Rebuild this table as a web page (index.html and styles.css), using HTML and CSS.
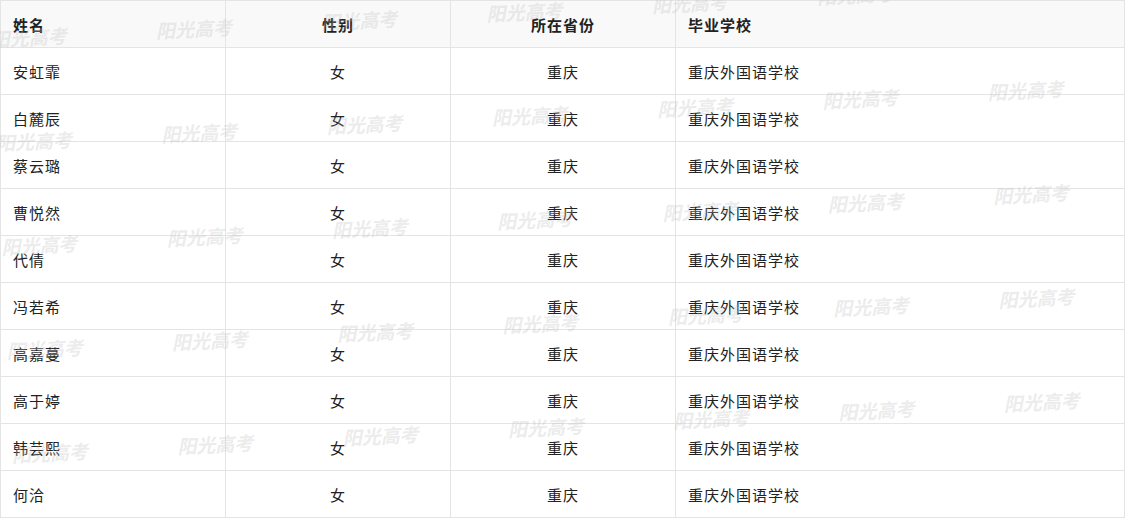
FILE: index.html
```html
<!DOCTYPE html>
<html lang="zh-CN">
<head>
<meta charset="utf-8">
<title>录取名单</title>
<link rel="stylesheet" href="styles.css">
</head>
<body>
<div class="sheet">
  <div class="table" role="table">
    <div class="row head" role="row">
      <div class="cell left">姓名</div>
      <div class="cell center">性别</div>
      <div class="cell center">所在省份</div>
      <div class="cell left">毕业学校</div>
    </div>
    <div class="row" role="row"><div class="cell left">安虹霏</div><div class="cell center">女</div><div class="cell center">重庆</div><div class="cell left">重庆外国语学校</div></div>
    <div class="row" role="row"><div class="cell left">白麓辰</div><div class="cell center">女</div><div class="cell center">重庆</div><div class="cell left">重庆外国语学校</div></div>
    <div class="row" role="row"><div class="cell left">蔡云璐</div><div class="cell center">女</div><div class="cell center">重庆</div><div class="cell left">重庆外国语学校</div></div>
    <div class="row" role="row"><div class="cell left">曹悦然</div><div class="cell center">女</div><div class="cell center">重庆</div><div class="cell left">重庆外国语学校</div></div>
    <div class="row" role="row"><div class="cell left">代倩</div><div class="cell center">女</div><div class="cell center">重庆</div><div class="cell left">重庆外国语学校</div></div>
    <div class="row" role="row"><div class="cell left">冯若希</div><div class="cell center">女</div><div class="cell center">重庆</div><div class="cell left">重庆外国语学校</div></div>
    <div class="row" role="row"><div class="cell left">高嘉蔓</div><div class="cell center">女</div><div class="cell center">重庆</div><div class="cell left">重庆外国语学校</div></div>
    <div class="row" role="row"><div class="cell left">高于婷</div><div class="cell center">女</div><div class="cell center">重庆</div><div class="cell left">重庆外国语学校</div></div>
    <div class="row" role="row"><div class="cell left">韩芸熙</div><div class="cell center">女</div><div class="cell center">重庆</div><div class="cell left">重庆外国语学校</div></div>
    <div class="row" role="row"><div class="cell left">何洽</div><div class="cell center">女</div><div class="cell center">重庆</div><div class="cell left">重庆外国语学校</div></div>
  </div>
  <div class="watermarks" aria-hidden="true">
    <span>阳光高考</span><span>阳光高考</span><span>阳光高考</span><span>阳光高考</span><span>阳光高考</span><span>阳光高考</span><span>阳光高考</span>
    <span>阳光高考</span><span>阳光高考</span><span>阳光高考</span><span>阳光高考</span><span>阳光高考</span><span>阳光高考</span><span>阳光高考</span>
    <span>阳光高考</span><span>阳光高考</span><span>阳光高考</span><span>阳光高考</span><span>阳光高考</span><span>阳光高考</span><span>阳光高考</span>
    <span>阳光高考</span><span>阳光高考</span><span>阳光高考</span><span>阳光高考</span><span>阳光高考</span><span>阳光高考</span><span>阳光高考</span>
    <span>阳光高考</span><span>阳光高考</span><span>阳光高考</span><span>阳光高考</span><span>阳光高考</span><span>阳光高考</span><span>阳光高考</span>
  </div>
</div>
</body>
</html>
```
FILE: styles.css
```css
html, body {
  margin: 0;
  padding: 0;
  background: #fff;
  overflow: hidden;
}

body {
  font-family: "Noto Sans CJK SC", "Liberation Sans", sans-serif;
  font-size: 15px;
  color: #222;
}

.sheet {
  position: relative;
  width: 1125px;
  height: 518px;
  overflow: hidden;
}

.table {
  width: 1125px;
  box-sizing: border-box;
  border-top: 1px solid #e4e4e4;
  border-left: 1px solid #e4e4e4;
}

.row {
  display: grid;
  grid-template-columns: 225px 225px 225px 449px;
  height: 47px;
  box-sizing: border-box;
  border-bottom: 1px solid #e4e4e4;
}

.row.head {
  background: #f9f9f9;
  font-weight: bold;
}

.cell {
  box-sizing: border-box;
  border-right: 1px solid #e4e4e4;
  display: flex;
  align-items: center;
  padding: 1px 12px 0;
  letter-spacing: 1px;
  white-space: nowrap;
}

.cell.left {
  justify-content: flex-start;
}

.cell.center {
  justify-content: center;
}

.watermarks {
  position: absolute;
  left: -10px;
  top: 27px;
  display: grid;
  grid-template-columns: repeat(7, 165.5px);
  grid-auto-rows: 104px;
  transform: rotate(-2.94deg);
  transform-origin: 0 0;
  pointer-events: none;
}

.watermarks span {
  display: block;
  height: 24px;
  line-height: 24px;
  font-size: 19px;
  font-weight: bold;
  font-style: italic;
  color: rgba(190, 190, 190, 0.3);
  white-space: nowrap;
}
```
